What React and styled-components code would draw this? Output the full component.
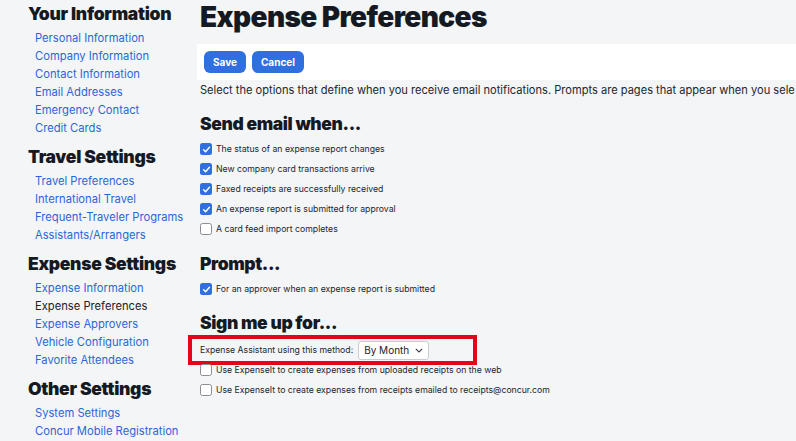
import React from 'react';
import styled, { createGlobalStyle } from 'styled-components';

const GlobalStyle = createGlobalStyle`
  html, body { margin: 0; padding: 0; background: #f4f5f7; }
  body { font-family: Inter, "Noto Sans", sans-serif; color: #1d2129; overflow: hidden; }
`;

const Page = styled.div`
  display: grid;
  grid-template-columns: 197px 1fr;
  width: 796px;
  height: 441px;
  overflow: hidden;
`;

const Sidebar = styled.nav`
  padding: 3px 0 0 28px;
`;

const SideHeading = styled.h2`
  margin: ${p => (p.$first ? '0' : '9px')} 0 4px;
  font-size: 17.5px;
  line-height: 22px;
  font-weight: 900;
  letter-spacing: -0.3px;
  color: #151a22;
  white-space: nowrap;
`;

const SideLinks = styled.ul`
  list-style: none;
  margin: 0;
  padding: 0 0 0 7px;
`;

const SideLink = styled.li`
  font-size: 11.2px;
  line-height: 18px;
  color: ${p => (p.$active ? '#1d2129' : '#2b66d9')};
  white-space: nowrap;
`;

const Main = styled.main`
  min-width: 0;
`;

const Title = styled.h1`
  margin: 0 0 0 3px;
  font-size: 28px;
  line-height: 34px;
  font-weight: 900;
  letter-spacing: -0.6px;
  color: #151a22;
  white-space: nowrap;
`;

const Toolbar = styled.div`
  display: flex;
  gap: 6px;
  align-items: center;
  margin-top: 10px;
  height: 36px;
  padding: 0 7px;
  background: #fff;
`;

const Button = styled.button`
  height: 22px;
  padding: 0 9px;
  border: none;
  border-radius: 6px;
  background: #2f6fe0;
  color: #fff;
  font-family: inherit;
  font-size: 10px;
  font-weight: 700;
`;

const Content = styled.div`
  padding-left: 3px;
`;

const Description = styled.p`
  margin: 2px 0 0;
  font-size: 11.1px;
  line-height: 16px;
  white-space: nowrap;
  color: #22262e;
`;

const SectionHeading = styled.h2`
  margin: ${p => p.$mt || 14}px 0 4px;
  font-size: 17.5px;
  line-height: 22px;
  font-weight: 900;
  letter-spacing: -0.4px;
  color: #151a22;
`;

const Row = styled.label`
  position: relative;
  display: flex;
  align-items: center;
  gap: 4px;
  height: 20px;
  font-size: 8.7px;
  color: #22262e;
  white-space: nowrap;
`;

const Box = styled.span`
  display: inline-flex;
  align-items: center;
  justify-content: center;
  width: 12px;
  height: 12px;
  box-sizing: border-box;
  border-radius: 2.5px;
  background: ${p => (p.$on ? '#2f6fe0' : '#fff')};
  border: ${p => (p.$on ? 'none' : '1px solid #8a8d93')};
`;

const Select = styled.span`
  display: inline-flex;
  align-items: center;
  gap: 6px;
  height: 19px;
  margin-left: 1px;
  padding: 0 5px 0 5px;
  box-sizing: border-box;
  background: #fff;
  border: 1px solid #c9ccd1;
  border-radius: 3px;
  font-size: 10px;
  color: #1d2129;
`;

const Highlight = styled.span`
  position: absolute;
  left: -12px;
  top: -5px;
  width: 289px;
  height: 30px;
  box-sizing: border-box;
  border: 4px solid #e30613;
  pointer-events: none;
`;

const Check = ({ on }) => (
  <Box $on={on}>
    {on && (
      <svg width="9" height="9" viewBox="0 0 10 10">
        <path d="M1.8 5.2 L4 7.4 L8.3 2.6" fill="none" stroke="#fff" strokeWidth="1.6" strokeLinecap="round" strokeLinejoin="round" />
      </svg>
    )}
  </Box>
);

const sidebar = [
  { title: 'Your Information', links: ['Personal Information', 'Company Information', 'Contact Information', 'Email Addresses', 'Emergency Contact', 'Credit Cards'] },
  { title: 'Travel Settings', links: ['Travel Preferences', 'International Travel', 'Frequent-Traveler Programs', 'Assistants/Arrangers'] },
  { title: 'Expense Settings', links: ['Expense Information', 'Expense Preferences', 'Expense Approvers', 'Vehicle Configuration', 'Favorite Attendees'] },
  { title: 'Other Settings', links: ['System Settings', 'Concur Mobile Registration'] },
];

const emailWhen = [
  ['The status of an expense report changes', true],
  ['New company card transactions arrive', true],
  ['Faxed receipts are successfully received', true],
  ['An expense report is submitted for approval', true],
  ['A card feed import completes', false],
];

export default function App() {
  return (
    <Page>
      <GlobalStyle />
      <Sidebar>
        {sidebar.map((group, i) => (
          <div key={group.title}>
            <SideHeading $first={i === 0}>{group.title}</SideHeading>
            <SideLinks>
              {group.links.map(l => (
                <SideLink key={l} $active={l === 'Expense Preferences'}>{l}</SideLink>
              ))}
            </SideLinks>
          </div>
        ))}
      </Sidebar>

      <Main>
        <Title>Expense Preferences</Title>
        <Toolbar>
          <Button>Save</Button>
          <Button>Cancel</Button>
        </Toolbar>
        <Content>
          <Description>
            Select the options that define when you receive email notifications. Prompts are pages that appear when you sele
          </Description>

          <SectionHeading $mt={15}>Send email when...</SectionHeading>
          {emailWhen.map(([text, on]) => (
            <Row key={text}><Check on={on} />{text}</Row>
          ))}

          <SectionHeading>Prompt...</SectionHeading>
          <Row><Check on />For an approver when an expense report is submitted</Row>

          <SectionHeading $mt={13}>Sign me up for...</SectionHeading>
          <Row style={{ marginTop: 6 }}>
            Expense Assistant using this method:
            <Select>
              By Month
              <svg width="8" height="5" viewBox="0 0 8 5">
                <path d="M0.8 0.8 L4 4 L7.2 0.8" fill="none" stroke="#3a3f47" strokeWidth="1.1" />
              </svg>
            </Select>
            <Highlight />
          </Row>
          <Row><Check on={false} />Use ExpenseIt to create expenses from uploaded receipts on the web</Row>
          <Row><Check on={false} />Use ExpenseIt to create expenses from receipts emailed to receipts@concur.com</Row>
        </Content>
      </Main>
    </Page>
  );
}
